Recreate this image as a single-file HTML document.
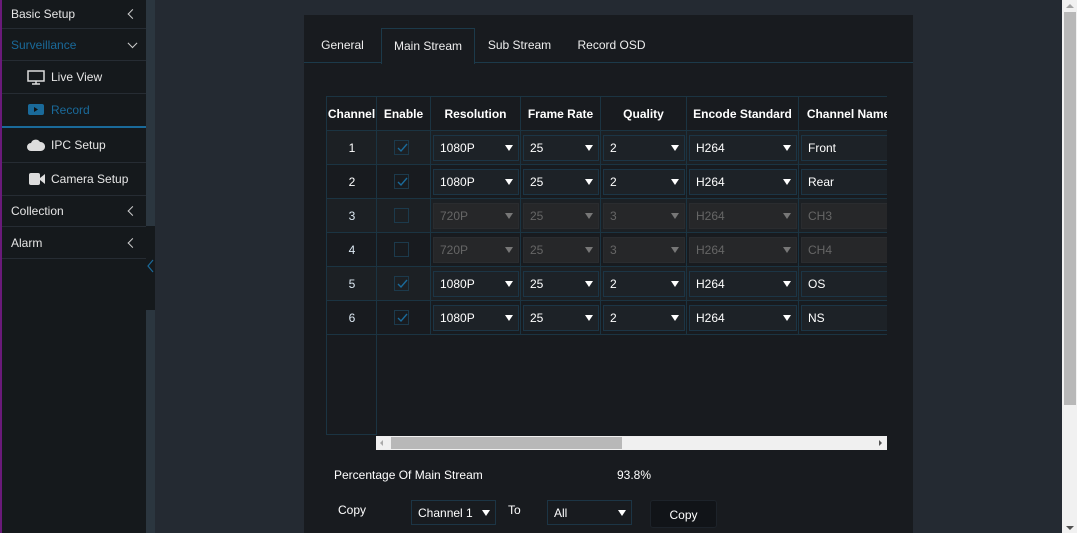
<!DOCTYPE html>
<html><head><meta charset="utf-8"><style>
*{box-sizing:border-box;margin:0;padding:0}
body{width:1077px;height:533px;overflow:hidden;background:#242a32;font-family:"Liberation Sans",sans-serif;font-size:12px;color:#fff;position:relative}
.a{position:absolute}
.side{left:0;top:0;width:146px;height:533px;background:#15191c;border-left:2px solid #6a1a7a}
.strip{left:146px;top:0;width:9px;height:533px;background:#2b363f}
.mi{position:absolute;left:0;width:144px;border-bottom:1px solid #262c33;font-size:12px;color:#e6e6e6}
.mi span{position:absolute;left:9px;top:50%;transform:translateY(-50%)}
.sub span{left:49px}
.chev{position:absolute;right:10px;top:50%;width:7px;height:7px;border-left:1.5px solid #ccc;border-bottom:1.5px solid #ccc;transform:translateY(-50%) rotate(45deg)}
.panel{left:304px;top:15px;width:609px;height:518px;background:#181b1f}
.tab{position:absolute;top:13px;height:35px;line-height:35px;text-align:center;font-size:12px;color:#eee}
.cell{position:absolute;border-right:1px solid #1b3442;border-bottom:1px solid #1b3442}
.hd{font-weight:bold;font-size:12px;text-align:center;line-height:34px;color:#fff}
.sel{position:absolute;height:26px;border:1px solid #1c3545;background:#1d2227;line-height:24px;padding-left:6px;font-size:12px;color:#fff}
.sel.d{background:#262729;color:#666;border-color:#2a2c2f}
.sel i{position:absolute;right:5px;top:9px;border-left:4px solid transparent;border-right:4px solid transparent;border-top:6px solid #fff}
.sel.d i{border-top-color:#777}
.cb{position:absolute;width:15px;height:15px;border:1px solid #1c3a4c}
.cb svg{position:absolute;left:1px;top:1px}
</style></head><body>
<div class="a side">
 <div class="mi" style="top:0;height:29px"><span>Basic Setup</span><div class="chev" style="transform:translateY(-50%) rotate(45deg)"></div></div>
 <div class="mi" style="top:29px;height:32px;color:#1a6a9a"><span>Surveillance</span><div class="chev" style="transform:translateY(-75%) rotate(-45deg)"></div></div>
 <div class="mi sub" style="top:61px;height:33px"><svg class="a" style="left:25px;top:9px" width="19" height="15"><rect x="1" y="1" width="16" height="10" fill="none" stroke="#ddd" stroke-width="1.5"/><path d="M5 14h8M9 11v3" stroke="#ddd" stroke-width="1.5"/></svg><span>Live View</span></div>
 <div class="mi sub" style="top:94px;height:34px;color:#1a6a9a;border-bottom:2px solid #1a6a9a"><svg class="a" style="left:26px;top:10px" width="16" height="11"><rect width="16" height="11" rx="2" fill="#1a6a9a"/><path d="M6 3l4 2.5-4 2.5z" fill="#111"/></svg><span>Record</span></div>
 <div class="mi sub" style="top:128px;height:35px"><svg class="a" style="left:25px;top:11px" width="18" height="12"><path d="M4 12a4 4 0 0 1 0-8 5 5 0 0 1 9-1 4.5 4.5 0 0 1 1 9z" fill="#ddd"/></svg><span>IPC Setup</span></div>
 <div class="mi sub" style="top:163px;height:33px"><svg class="a" style="left:27px;top:10px" width="17" height="12"><rect width="11" height="12" rx="2" fill="#ddd"/><path d="M11 5l5-4v10l-5-4z" fill="#ddd"/></svg><span>Camera Setup</span></div>
 <div class="mi" style="top:196px;height:31px"><span>Collection</span><div class="chev"></div></div>
 <div class="mi" style="top:227px;height:32px"><span>Alarm</span><div class="chev"></div></div>
</div>
<div class="a strip"></div>
<div class="a" style="left:146px;top:226px;width:9px;height:84px;background:#15191c"></div>
<svg class="a" style="left:146px;top:259px" width="9" height="14"><path d="M7 1L2 7l5 6" fill="none" stroke="#1a6a9a" stroke-width="1.2"/></svg>
<div class="a" style="left:1062px;top:0;width:15px;height:533px;background:#f1f1f1"></div>
<div class="a" style="left:1064px;top:12px;width:12px;height:393px;background:#b8b8b8"></div>
<div class="a" style="left:1066px;top:4px;border-left:4px solid transparent;border-right:4px solid transparent;border-bottom:4px solid #a3a3a3"></div>
<div class="a" style="left:1066px;top:526px;border-left:4px solid transparent;border-right:4px solid transparent;border-top:4px solid #505050"></div>

<div class="a panel">
 <div class="a" style="left:0;top:47px;width:609px;height:1px;background:#1c3a4a"></div>
 <div class="tab" style="left:0;width:77px">General</div>
 <div class="tab" style="left:77px;width:94px;background:#181b1f;border:1px solid #1c3a4a;border-bottom:none;height:36px">Main Stream</div>
 <div class="tab" style="left:171px;width:89px">Sub Stream</div>
 <div class="tab" style="left:260px;width:95px">Record OSD</div>
</div>
<div class="a" style="left:326px;top:96px;width:561px;height:339px;border-left:1px solid #1b3442;border-top:1px solid #1b3442;overflow:hidden" id="t"></div>
<div class="a" style="left:326px;top:334px;width:51px;height:101px;border-right:1px solid #1b3442;border-bottom:1px solid #1b3442"></div>
<div class="a" style="left:376px;top:436px;width:511px;height:14px;background:#f0f0f0"></div>
<div class="a" style="left:391px;top:437px;width:231px;height:12px;background:#b8b8b8"></div>
<div class="a" style="left:380px;top:440px;border-top:3px solid transparent;border-bottom:3px solid transparent;border-right:3px solid #aaa"></div>
<div class="a" style="left:879px;top:440px;border-top:3px solid transparent;border-bottom:3px solid transparent;border-left:3px solid #555"></div>
<div class="a" style="left:334px;top:468px">Percentage Of Main Stream</div>
<div class="a" style="left:617px;top:468px">93.8%</div>
<div class="a" style="left:338px;top:503px">Copy</div>
<div class="sel" style="left:411px;top:500px;width:85px;height:25px;background:#181b1f">Channel 1<i></i></div>
<div class="a" style="left:508px;top:503px">To</div>
<div class="sel" style="left:547px;top:500px;width:85px;height:25px;background:#181b1f">All<i></i></div>
<div class="a" style="left:650px;top:500px;width:67px;height:28px;background:#111418;border:1px solid #1d232a;border-radius:3px;text-align:center;line-height:28px">Copy</div>
<script>
var t=document.getElementById('t'),h='';
var cols=[[0,50],[50,54],[104,90],[194,80],[274,86],[360,112],[472,100]];
var heads=['Channel','Enable','Resolution','Frame Rate','Quality','Encode Standard','Channel Name'];
heads.forEach(function(x,i){h+='<div class="cell hd" style="left:'+cols[i][0]+'px;top:0;width:'+cols[i][1]+'px;height:34px">'+x+'</div>';});
var rows=[['1',1,'1080P','25','2','Front',0],['2',1,'1080P','25','2','Rear',0],['3',0,'720P','25','3','CH3',1],['4',0,'720P','25','3','CH4',1],['5',1,'1080P','25','2','OS',0],['6',1,'1080P','25','2','NS',0]];
rows.forEach(function(r,j){var y=34+j*34,bg=j%2==0?'#1c2024':'#181b1f';
h+='<div class="a" style="left:0;top:'+y+'px;width:561px;height:34px;background:'+bg+'"></div>';
cols.forEach(function(c,i){h+='<div class="cell" style="left:'+c[0]+'px;top:'+y+'px;width:'+c[1]+'px;height:34px"></div>';});
h+='<div class="a" style="left:0;top:'+(y+10)+'px;width:50px;text-align:center;color:'+(j<2?'#fff':'#dce8f2')+'">'+r[0]+'</div>';
h+='<div class="cb" style="left:67px;top:'+(y+9)+'px">'+(r[1]?'<svg width="12" height="11"><path d="M2 6l3 3 6-7" fill="none" stroke="#1a6a9a" stroke-width="1.4"/></svg>':'')+'</div>';
var d=r[6]?' d':'';
h+='<div class="sel'+d+'" style="left:106px;top:'+(y+4)+'px;width:86px">'+r[2]+'<i></i></div>';
h+='<div class="sel'+d+'" style="left:196px;top:'+(y+4)+'px;width:76px">'+r[3]+'<i></i></div>';
h+='<div class="sel'+d+'" style="left:276px;top:'+(y+4)+'px;width:82px">'+r[4]+'<i></i></div>';
h+='<div class="sel'+d+'" style="left:362px;top:'+(y+4)+'px;width:108px">H264<i></i></div>';
h+='<div class="sel'+d+'" style="left:474px;top:'+(y+4)+'px;width:100px">'+r[5]+'</div>';
});
cols.slice(1).forEach(function(c){h+='<div class="a" style="left:'+(c[0]-1)+'px;top:238px;width:1px;height:101px;background:'+(c[0]==50?'#1b3442':'transparent')+'"></div>';});
t.innerHTML=h;
</script>
</body></html>
